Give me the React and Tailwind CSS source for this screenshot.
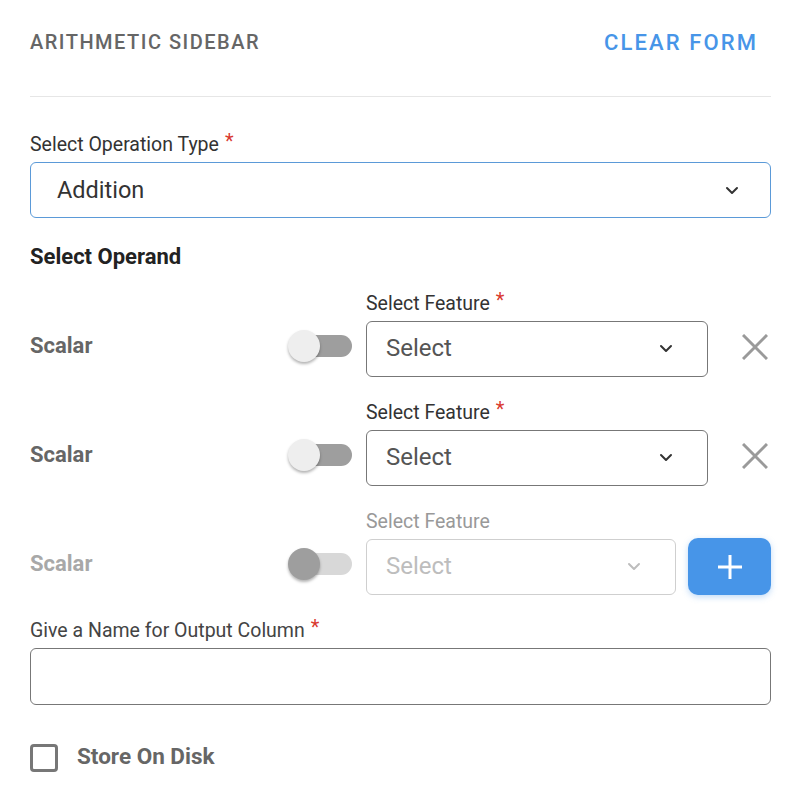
import React, { useState } from 'react';

const Chevron = ({ className }) => (
  <svg className={className} width="14" height="9" viewBox="0 0 14 9" fill="none">
    <path d="M2 2l5 5 5-5" stroke="currentColor" strokeWidth="2" strokeLinecap="round" strokeLinejoin="round" />
  </svg>
);

const Req = () => <span className="ml-[6px] text-[20px] leading-none text-[#d93a2f] relative top-[-4px]">*</span>;

const Toggle = ({ disabled }) => (
  <div className="relative w-[64px] h-[32px] flex items-center">
    <div className={`absolute left-[2px] right-0 h-[22px] rounded-full ${disabled ? 'bg-[#d8d8d8]' : 'bg-[#9e9e9e]'}`} />
    <div
      className={`absolute left-0 w-[32px] h-[32px] rounded-full shadow-[0_2px_3px_rgba(0,0,0,0.3)] ${
        disabled ? 'bg-[#9e9e9e]' : 'bg-[#eeeeee]'
      }`}
    />
  </div>
);

const OperandRow = ({ disabled, last }) => (
  <div className="flex items-end mt-[24px]">
    <div className="w-[336px] h-[56px] flex items-center justify-between pr-[14px] pb-[6px]">
      <span className={`text-[22px] leading-none font-bold ${disabled ? 'text-[#a8a8a8]' : 'text-[#666]'}`}>Scalar</span>
      <Toggle disabled={disabled} />
    </div>
    <div className={last ? 'w-[310px]' : 'w-[342px]'}>
      <div className={`h-[24px] flex items-center text-[19.5px] ${disabled ? 'text-[#999]' : 'text-[#333]'}`}>
        Select Feature
        {!disabled && <Req />}
      </div>
      <div
        className={`mt-[5px] h-[56px] rounded-[6px] border flex items-center justify-between pl-[19px] pr-[34px] pb-[2px] ${
          disabled ? 'border-[#cfcfcf]' : 'border-[#777]'
        }`}
      >
        <span className={`text-[24px] ${disabled ? 'text-[#bdbdbd]' : 'text-[#555]'}`}>Select</span>
        <Chevron className={disabled ? 'text-[#bdbdbd]' : 'text-[#333]'} />
      </div>
    </div>
    {last ? (
      <button className="ml-[12px] w-[83px] h-[57px] rounded-[10px] bg-[#4795e8] shadow-[0_2px_6px_rgba(71,149,232,0.35)] flex items-center justify-center">
        <svg width="28" height="28" viewBox="0 0 28 28">
          <path d="M14 2v24M2 14h24" stroke="white" strokeWidth="3" />
        </svg>
      </button>
    ) : (
      <div className="flex-1 h-[56px] flex items-center justify-end pr-[3px] pb-[4px]">
        <svg width="26" height="26" viewBox="0 0 26 26">
          <path d="M1 1l24 24M25 1L1 25" stroke="#9a9a9a" strokeWidth="3" />
        </svg>
      </div>
    )}
  </div>
);

export default function App() {
  const [store, setStore] = useState(false);
  return (
    <div className="w-[790px] h-[792px] bg-white pl-[30px] pr-[19px] font-['Roboto',sans-serif]">
      <div className="h-[84px] flex items-center justify-between pr-[13px]">
        <span className="text-[20px] font-medium tracking-[1.5px] text-[#666]">ARITHMETIC SIDEBAR</span>
        <button className="text-[22px] font-medium tracking-[2.1px] text-[#4795e8]">CLEAR FORM</button>
      </div>
      <div className="mt-[12px] border-t border-[#e6e6e6]" />

      <div className="mt-[36px] h-[24px] flex items-center text-[19.5px] text-[#333]">
        Select Operation Type
        <Req />
      </div>
      <div className="mt-[5px] h-[56px] rounded-[6px] border border-[#5b9ad8] flex items-center justify-between pl-[26px] pr-[31px]">
        <span className="text-[23.5px] text-[#333] pt-[2px]">Addition</span>
        <Chevron className="text-[#333]" />
      </div>

      <div className="mt-[24px] h-[28px] flex items-center text-[22px] font-bold text-[#222]">Select Operand</div>

      <div className="-mt-[2px]">
        <OperandRow />
        <OperandRow />
        <OperandRow disabled last />
      </div>

      <div className="mt-[24px] h-[24px] flex items-center text-[19.5px] text-[#444]">
        Give a Name for Output Column
        <Req />
      </div>
      <input className="mt-[5px] w-full h-[57px] rounded-[6px] border border-[#777] outline-none px-[20px] text-[20px]" />

      <label className="mt-[37px] flex items-center cursor-pointer">
        <input type="checkbox" className="hidden" checked={store} onChange={() => setStore(!store)} />
        <span className="w-[28px] h-[28px] rounded-[4px] border-[3px] border-[#777]" />
        <span className="ml-[19px] text-[22.5px] font-bold text-[#666] -mt-[2px]">Store On Disk</span>
      </label>
    </div>
  );
}
